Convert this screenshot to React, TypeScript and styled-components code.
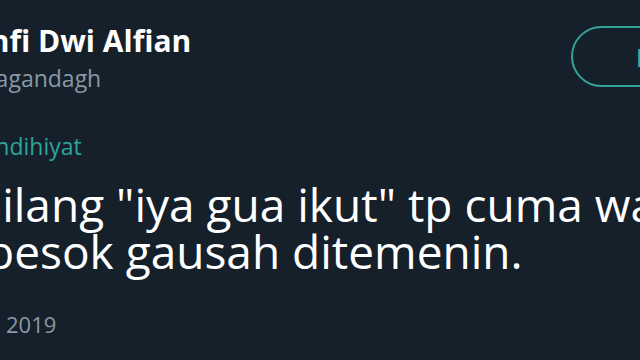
import React from "react";
import styled, { createGlobalStyle } from "styled-components";

const GlobalStyle = createGlobalStyle`
  html, body {
    margin: 0;
    padding: 0;
    background: #15202b;
    overflow: hidden;
  }
`;

type ShiftProps = { $shift: number };

export default function App() {
  return (
    <>
      <GlobalStyle />
      <Screen>
        <Header>
          <Author>
            <Name $shift={-60}>Luthfi Dwi Alfian</Name>
            <Handle $shift={-25}>@agandagh</Handle>
          </Author>
          <FollowButton>Following</FollowButton>
        </Header>
        <ReplyTo $shift={-163}>Replying to @andihiyat</ReplyTo>
        <Body>
          <TextLine $shift={-26}>bilang "iya gua ikut" tp cuma wacana</TextLine>
          <TextLine $shift={-14}>besok gausah ditemenin.</TextLine>
        </Body>
        <Meta>2019</Meta>
      </Screen>
    </>
  );
}

const Screen = styled.div`
  width: 640px;
  height: 360px;
  overflow: hidden;
  background: #15202b;
  display: flex;
  flex-direction: column;
  font-family: "Open Sans", "Noto Sans", sans-serif;
`;

const Header = styled.div`
  display: flex;
  align-items: flex-start;
  padding-top: 23px;
  margin-right: -111px;
`;

const Author = styled.div`
  flex: 1;
  min-width: 0;
  display: flex;
  flex-direction: column;
  white-space: nowrap;
`;

const Name = styled.div<ShiftProps>`
  margin-left: ${(p) => p.$shift}px;
  font-size: 30px;
  font-weight: 700;
  line-height: 36px;
  color: #ffffff;
`;

const Handle = styled.div<ShiftProps>`
  margin-left: ${(p) => p.$shift}px;
  font-size: 23px;
  line-height: 38px;
  color: #8899a6;
`;

const FollowButton = styled.button`
  flex: none;
  width: 180px;
  height: 61px;
  margin-top: 3px;
  border: 2px solid #33a497;
  border-radius: 31px;
  background: transparent;
  color: #2fb0a2;
  font-family: inherit;
  font-size: 25px;
  font-weight: 700;
  text-align: left;
  padding: 0 0 0 63px;
`;

const ReplyTo = styled.div<ShiftProps>`
  margin-left: ${(p) => p.$shift}px;
  margin-top: 34px;
  font-size: 23px;
  line-height: 30px;
  color: #2fa59a;
  white-space: nowrap;
`;

const Body = styled.div`
  margin-top: 20px;
  display: flex;
  flex-direction: column;
  color: #ffffff;
  font-size: 46px;
  line-height: 47px;
  white-space: nowrap;
`;

const TextLine = styled.div<ShiftProps>`
  margin-left: ${(p) => p.$shift}px;
`;

const Meta = styled.div`
  margin-left: 6px;
  margin-top: 34px;
  font-size: 22px;
  line-height: 30px;
  color: #8899a6;
  white-space: nowrap;
`;
